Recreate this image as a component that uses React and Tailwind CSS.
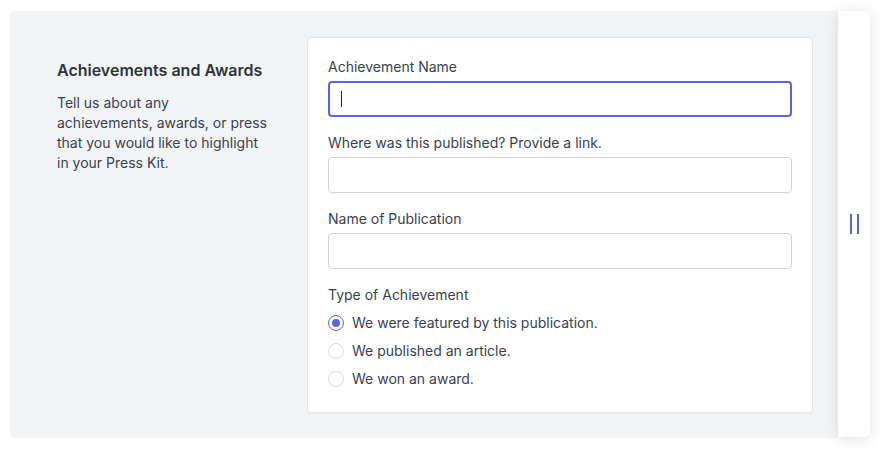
import React from "react";

function Field({ label, focused }) {
  return (
    <div className="flex flex-col">
      <label className="text-[14px] leading-[20px] text-[#3a4250]">{label}</label>
      <div
        className={
          "mt-[4px] h-[36px] rounded-[4px] bg-white relative " +
          (focused ? "border-2 border-[#5a67d8]" : "border border-[#cfd4dc]")
        }
      >
        {focused && <div className="absolute left-[11px] top-[8px] w-px h-[16px] bg-[#222]" />}
      </div>
    </div>
  );
}

function Radio({ checked, label }) {
  return (
    <div className="flex items-center h-[20px]">
      <div
        className={
          "w-[16px] h-[16px] rounded-full flex items-center justify-center bg-white " +
          (checked ? "border border-[#5a67d8]" : "border border-[#d9dde3]")
        }
      >
        {checked && <div className="w-[8px] h-[8px] rounded-full bg-[#5a67d8]" />}
      </div>
      <span className="ml-[8px] text-[14px] leading-[20px] text-[#3a4250]">{label}</span>
    </div>
  );
}

export default function App() {
  return (
    <div
      className="w-[885px] h-[457px] bg-white pt-[11px] pl-[10px] flex items-start"
      style={{ fontFamily: "Inter, 'Noto Sans', sans-serif" }}
    >
      <div className="w-[828px] h-[427px] bg-[#f3f4f6] rounded-l-[5px] flex pt-[26px]">
        <div className="w-[270px] shrink-0 pl-[47px] pt-[23px]">
          <h2 className="whitespace-nowrap text-[16px] leading-[20px] font-semibold text-[#2d3441]">
            Achievements and Awards
          </h2>
          <p className="mt-[13px] whitespace-nowrap text-[14px] leading-[20px] text-[#3a4250]">
            Tell us about any
            <br />
            achievements, awards, or press
            <br />
            that you would like to highlight
            <br />
            in your Press Kit.
          </p>
        </div>
        <div className="ml-[27px] w-[506px] h-[376px] bg-white border border-[#e3e6ea] rounded-[4px] shadow-[0_1px_2px_rgba(0,0,0,0.04)] px-[20px] pt-[19px]">
          <div className="flex flex-col gap-[16px]">
            <Field label="Achievement Name" focused />
            <Field label="Where was this published? Provide a link." />
            <Field label="Name of Publication" />
            <div>
              <div className="text-[14px] leading-[20px] text-[#3a4250]">Type of Achievement</div>
              <div className="mt-[8px] flex flex-col gap-[8px]">
                <Radio checked label="We were featured by this publication." />
                <Radio label="We published an article." />
                <Radio label="We won an award." />
              </div>
            </div>
          </div>
        </div>
      </div>
      <div className="relative z-10 w-[32px] h-[426px] bg-white rounded-r-[5px] shadow-[0_2px_14px_rgba(0,0,0,0.12)] flex items-center justify-center gap-[5px]">
        <div className="w-[2px] h-[20px] bg-[#5a67d8]" />
        <div className="w-[2px] h-[20px] bg-[#5a67d8]" />
      </div>
    </div>
  );
}
